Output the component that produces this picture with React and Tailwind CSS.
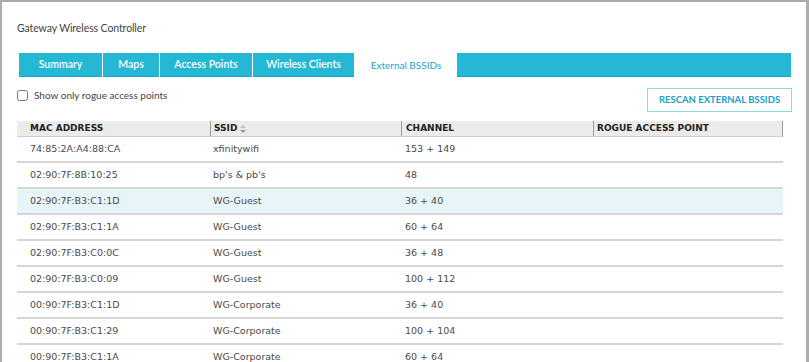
import React, { useState } from 'react';

const TABS = [
  { label: 'Summary', width: 'w-[84px]' },
  { label: 'Maps', width: 'w-[57px]' },
  { label: 'Access Points', width: 'w-[93px]' },
  { label: 'Wireless Clients', width: 'w-[102px]' },
  { label: 'External BSSIDs', width: 'w-[102px]' },
];

const ROWS = [
  { mac: '74:85:2A:A4:88:CA', ssid: 'xfinitywifi', channel: '153 + 149' },
  { mac: '02:90:7F:8B:10:25', ssid: "bp's & pb's", channel: '48' },
  { mac: '02:90:7F:B3:C1:1D', ssid: 'WG-Guest', channel: '36 + 40' },
  { mac: '02:90:7F:B3:C1:1A', ssid: 'WG-Guest', channel: '60 + 64' },
  { mac: '02:90:7F:B3:C0:0C', ssid: 'WG-Guest', channel: '36 + 48' },
  { mac: '02:90:7F:B3:C0:09', ssid: 'WG-Guest', channel: '100 + 112' },
  { mac: '00:90:7F:B3:C1:1D', ssid: 'WG-Corporate', channel: '36 + 40' },
  { mac: '00:90:7F:B3:C1:29', ssid: 'WG-Corporate', channel: '100 + 104' },
  { mac: '00:90:7F:B3:C1:1A', ssid: 'WG-Corporate', channel: '60 + 64' },
];

const ui = { fontFamily: 'Lato, "Open Sans", sans-serif' };
const tbl = { fontFamily: '"DejaVu Sans", Verdana, sans-serif' };

export default function App() {
  const [active, setActive] = useState('External BSSIDs');
  const [rogueOnly, setRogueOnly] = useState(false);
  const [selected, setSelected] = useState(2);

  return (
    <div className="w-[809px] h-[362px] overflow-hidden bg-white">
      <div className="h-[380px] border-l-2 border-t-2 border-r-[3px] border-[#ababab] pl-[15px] pr-[14px]">
        <div className="pt-[19px] text-[10.5px] leading-[14px] tracking-[-0.1px] text-[#444]" style={ui}>
          Gateway Wireless Controller
        </div>

        {/* tabs */}
        <div className="mt-[18px] ml-[2px] w-[772px] h-[24px] bg-[#25b8d4] border-b border-[#1aa7c4] flex">
          {TABS.map((tab) => {
            const isActive = tab.label === active;
            return (
              <button
                key={tab.label}
                onClick={() => setActive(tab.label)}
                className={`${tab.width} h-[24px] -mb-px flex items-center justify-center border-r border-white ${
                  isActive
                    ? 'bg-white text-[#1ea5c6] border border-dotted border-[#8a9aa0] text-[10px] font-normal'
                    : 'text-white text-[10.5px] font-semibold'
                }`}
                style={ui}
              >
                {tab.label}
              </button>
            );
          })}
        </div>

        {/* toolbar */}
        <div className="mt-[11px] flex items-start justify-between">
          <label className="flex items-center gap-[6px] text-[10px] text-[#444] cursor-pointer pt-[1px]" style={ui}>
            <input
              type="checkbox"
              checked={rogueOnly}
              onChange={() => setRogueOnly(!rogueOnly)}
              className="w-[11px] h-[11px] m-0 accent-[#25b8d4]"
            />
            <span className="leading-[13px]">Show only rogue access points</span>
          </label>
          <button
            className="w-[145px] h-[24px] border border-[#92d7e6] text-[#1a9fc4] text-[9.5px] font-bold bg-white"
            style={ui}
          >
            RESCAN EXTERNAL BSSIDS
          </button>
        </div>

        {/* table */}
        <div className="mt-[9px] w-[766px]" style={tbl}>
          <div className="flex h-[16px] bg-[#ebebeb] border-b border-[#cfcfcf] border-r border-r-[#9a9a9a] text-[9px] font-bold text-[#222] leading-[15px]">
            <div className="w-[193px] pl-[13px]">MAC ADDRESS</div>
            <div className="w-[191px] pl-[3px] border-l border-[#9a9a9a] flex items-center gap-[3px]">
              SSID
              <svg width="6" height="8" viewBox="0 0 6 8" className="text-[#999]">
                <path d="M0 3 L3 0 L6 3 Z" fill="currentColor" opacity="0.5" />
                <path d="M0 5 L3 8 L6 5 Z" fill="currentColor" />
              </svg>
            </div>
            <div className="w-[192px] pl-[4px] border-l border-[#9a9a9a]">CHANNEL</div>
            <div className="flex-1 pl-[3px] border-l border-[#9a9a9a]">ROGUE ACCESS POINT</div>
          </div>
          {ROWS.map((row, i) => (
            <div
              key={row.mac}
              onClick={() => setSelected(i)}
              className={`flex h-[26px] items-center border-b-2 border-[#d6d6d6] text-[9.5px] text-[#4a4a4a] ${
                i === selected ? 'bg-[#e7f4f8]' : 'bg-white'
              }`}
            >
              <div className="w-[193px] pl-[13px]">{row.mac}</div>
              <div className="w-[191px] pl-[3px]">{row.ssid}</div>
              <div className="w-[192px] pl-[4px]">{row.channel}</div>
              <div className="flex-1" />
            </div>
          ))}
        </div>
      </div>
    </div>
  );
}
